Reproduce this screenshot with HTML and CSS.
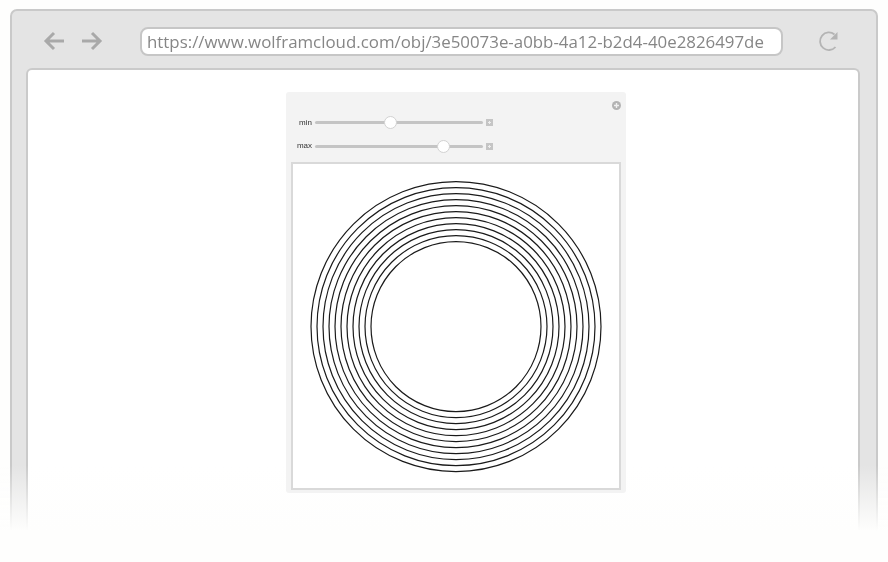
FILE: index.html
```html
<!DOCTYPE html>
<html lang="en">
<head>
<meta charset="utf-8">
<title>Wolfram Cloud</title>
<link rel="stylesheet" href="styles.css">
</head>
<body>
<div class="window">
  <div class="toolbar">
    <div class="nav">
      <svg class="icon" width="24" height="20" viewBox="0 0 24 20"><path d="M21 10H3M11 2 3 10l8 8" fill="none" stroke="#a9a9a9" stroke-width="3"/></svg>
      <svg class="icon" width="24" height="20" viewBox="0 0 24 20"><path d="M2 10h18M12 2l8 8-8 8" fill="none" stroke="#a9a9a9" stroke-width="3"/></svg>
    </div>
    <div class="url">https://www.wolframcloud.com/obj/3e50073e-a0bb-4a12-b2d4-40e2826497de</div>
    <svg class="reload" width="22" height="22" viewBox="0 0 22 22"><path d="M17.5 17A8.8 8.8 0 1 1 16.5 4.5" fill="none" stroke="#b4b4b4" stroke-width="1.8"/><path d="M19.5 2v7.5h-7.5z" fill="#b4b4b4"/></svg>
  </div>
  <div class="content">
    <div class="panel">
      <div class="plus-row">
        <svg class="plus-round" width="9" height="9" viewBox="0 0 9 9"><circle cx="4.5" cy="4.5" r="4.5" fill="#b3b3b3"/><path d="M4.5 2v5M2 4.5h5" stroke="#f0f0f0" stroke-width="1.4"/></svg>
      </div>
      <div class="slider-row">
        <span class="label">min</span>
        <div class="track"><span class="thumb thumb-min"></span></div>
        <span class="mini"></span>
      </div>
      <div class="slider-row">
        <span class="label">max</span>
        <div class="track"><span class="thumb thumb-max"></span></div>
        <span class="mini"></span>
      </div>
      <div class="plot">
        <svg width="326" height="324" viewBox="0 0 326 324" fill="none" stroke="#1a1a1a" stroke-width="1.2">
          <circle cx="163" cy="162.6" r="145"/><circle cx="163" cy="162.6" r="139"/><circle cx="163" cy="162.6" r="133"/><circle cx="163" cy="162.6" r="127"/><circle cx="163" cy="162.6" r="121"/><circle cx="163" cy="162.6" r="115"/><circle cx="163" cy="162.6" r="109"/><circle cx="163" cy="162.6" r="103"/><circle cx="163" cy="162.6" r="97"/><circle cx="163" cy="162.6" r="91"/><circle cx="163" cy="162.6" r="85"/>
        </svg>
      </div>
    </div>
  </div>
  <div class="fade"></div>
</div>
</body>
</html>
```
FILE: styles.css
```css
* { box-sizing: border-box; }
html, body { margin: 0; height: 100%; }
body { background: #fefefd; overflow: hidden; }
.window {
  position: relative;
  margin: 9px 10px 0;
  height: 560px;
  background: #e4e4e4;
  border: 2px solid #c9c9c9;
  border-radius: 7px 7px 0 0;
  padding: 0 16px 0 14px;
  display: flex;
  flex-direction: column;
  filter: blur(0.35px);
}
.toolbar { height: 57px; display: flex; align-items: center; flex: none; }
.nav { display: flex; gap: 13px; width: 114px; padding: 3px 0 0 17px; flex: none; }
.icon { display: block; }
.url {
  width: 643px;
  height: 29px;
  margin-top: 3px;
  padding-left: 5px;
  flex: none;
  background: #fff;
  border: 2px solid #c6c6c6;
  border-radius: 8px;
  font: 16.86px/25px "Open Sans", sans-serif;
  color: #868686;
  white-space: nowrap;
}
.reload { margin: 3px 0 0 35px; flex: none; }
.content {
  flex: 1;
  background: #fff;
  border: 2px solid #cacaca;
  border-bottom: 0;
  border-radius: 6px 6px 0 0;
  display: flex;
  justify-content: center;
  padding-top: 22px;
}
.panel {
  position: relative;
  z-index: 2;
  width: 340px;
  height: 401px;
  margin-left: 26px;
  background: #f3f3f3;
  border-radius: 3px;
  padding: 0 5px;
  display: flex;
  flex-direction: column;
}
.plus-row { height: 19px; display: flex; justify-content: flex-end; align-items: flex-start; padding-top: 9px; flex: none; }
.plus-round { display: block; }
.slider-row { height: 23.5px; display: flex; align-items: center; flex: none; }
.label {
  width: 21px;
  text-align: right;
  font: 8px/10px "Liberation Sans", sans-serif;
  color: #333;
  flex: none;
}
.track {
  width: 168px; height: 3px; margin-left: 3px;
  background: #c4c4c4; border-radius: 2px;
  position: relative; flex: none;
}
.thumb {
  position: absolute; top: -5px;
  width: 13px; height: 13px; border-radius: 50%;
  background: #fff; border: 1px solid #d2d2d2;
}
.thumb-min { left: 68.5px; }
.thumb-max { left: 121.5px; }
.mini {
  width: 7px; height: 7px; margin-left: 3px;
  flex: none;
  background:
    linear-gradient(#eee, #eee) center / 3px 1px no-repeat,
    linear-gradient(#eee, #eee) center / 1px 3px no-repeat,
    #c5c5c5;
}
.plot {
  width: 330px; height: 328px; margin-top: 4px;
  background: #fff; border: 2px solid #d9d9d9; flex: none;
}
.plot svg { display: block; }
.fade {
  position: absolute; left: -12px; right: -12px; top: 454px; height: 100px;
  background: linear-gradient(to bottom, rgba(254,254,253,0), #fefefd 66%);
  z-index: 1;
}
```
